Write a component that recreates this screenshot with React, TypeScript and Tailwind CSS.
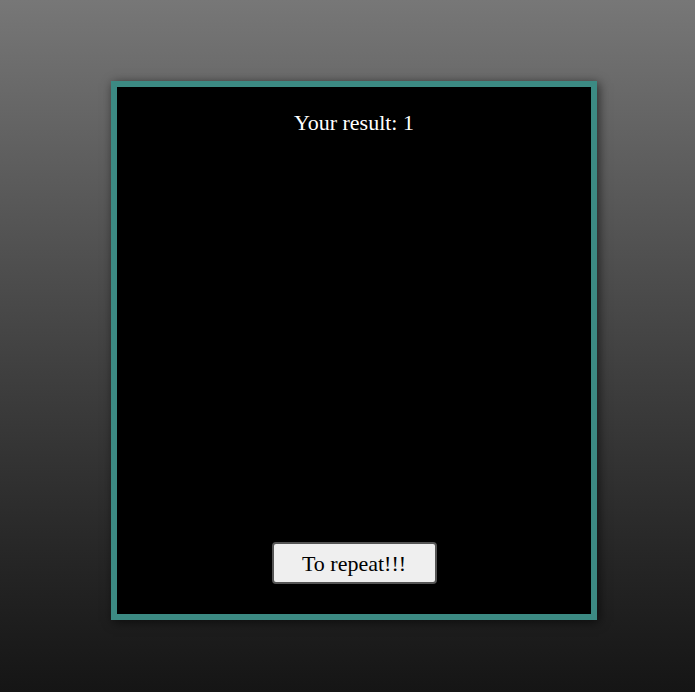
export default function App() {
  return (
    <div className="min-h-[692px] w-full bg-gradient-to-b from-[#777777] to-[#151515] pt-[81px] font-['Liberation_Serif',serif]">
      <div className="ml-[111px] flex h-[539px] w-[486px] flex-col items-center justify-between border-[6px] border-[#3c8a83] bg-black pt-[22px] pb-[30px] shadow-[2px_2px_10px_rgba(0,0,0,0.6)]">
        <p className="text-[22px] leading-[28px] text-white">Your result: 1</p>
        <button className="h-[42px] w-[165px] rounded-[4px] border-2 border-[#555555] bg-[#efefef] text-[22px] text-black">
          To repeat!!!
        </button>
      </div>
    </div>
  );
}
